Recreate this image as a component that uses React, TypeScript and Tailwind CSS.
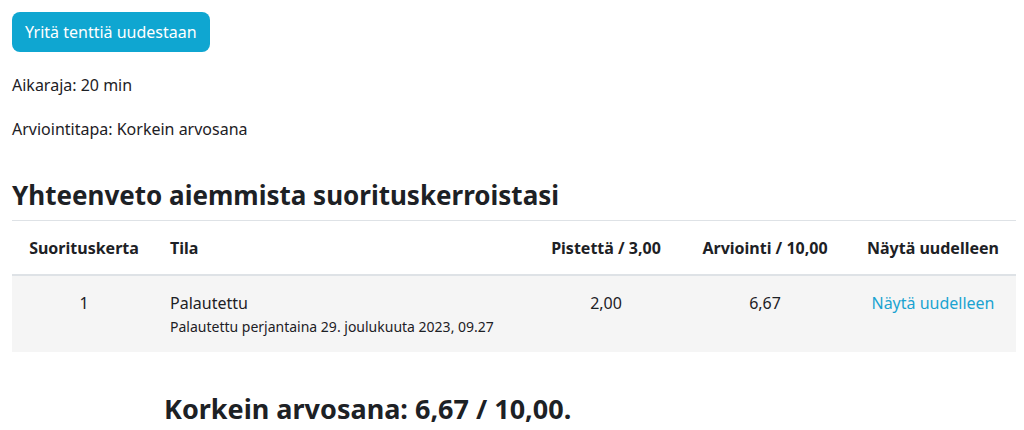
import React from "react";

const font = { fontFamily: '"Noto Sans", "Open Sans", sans-serif' };

export default function App() {
    return (
        <div className="w-[1024px] h-[430px] bg-white text-[#1d2125] px-3 pt-3 overflow-hidden" style={font}>
            <button className="h-10 px-[13px] rounded-lg bg-[#0fa6d1] text-white text-[16px]">
                Yritä tenttiä uudestaan
            </button>

            <p className="mt-[22px] text-[16px] leading-[22px]">Aikaraja: 20 min</p>
            <p className="mt-[22px] text-[16px] leading-[22px]">Arviointitapa: Korkein arvosana</p>

            <h2 className="mt-[40px] text-[26px] leading-[30px] font-bold">
                Yhteenveto aiemmista suorituskerroistasi
            </h2>

            <div className="mt-[10px] w-[1004px] text-[16px]">
                <div className="grid grid-cols-[144px_384px_132px_186px_1fr] h-[56px] items-center border-t border-[#dee2e6] border-b-2 font-bold">
                    <div className="text-center">Suorituskerta</div>
                    <div className="pl-[14px]">Tila</div>
                    <div className="text-center">Pistettä / 3,00</div>
                    <div className="text-center">Arviointi / 10,00</div>
                    <div className="text-center pr-[8px]">Näytä uudelleen</div>
                </div>
                <div className="grid grid-cols-[144px_384px_132px_186px_1fr] h-[76px] bg-[#f5f5f5] items-start pt-[16px]">
                    <div className="text-center leading-[22px]">1</div>
                    <div className="pl-[14px]">
                        <div className="leading-[22px]">Palautettu</div>
                        <div className="text-[14px] leading-[20px] mt-[3px]">Palautettu perjantaina 29. joulukuuta 2023, 09.27</div>
                    </div>
                    <div className="text-center leading-[22px]">2,00</div>
                    <div className="text-center leading-[22px]">6,67</div>
                    <div className="text-center pr-[8px] leading-[22px]">
                        <a href="#" className="text-[#1aa3d1]">Näytä uudelleen</a>
                    </div>
                </div>
            </div>

            <h3 className="mt-[42px] pl-[152px] text-[27px] leading-[30px] font-bold">
                Korkein arvosana: 6,67 / 10,00.
            </h3>
        </div>
    );
}
